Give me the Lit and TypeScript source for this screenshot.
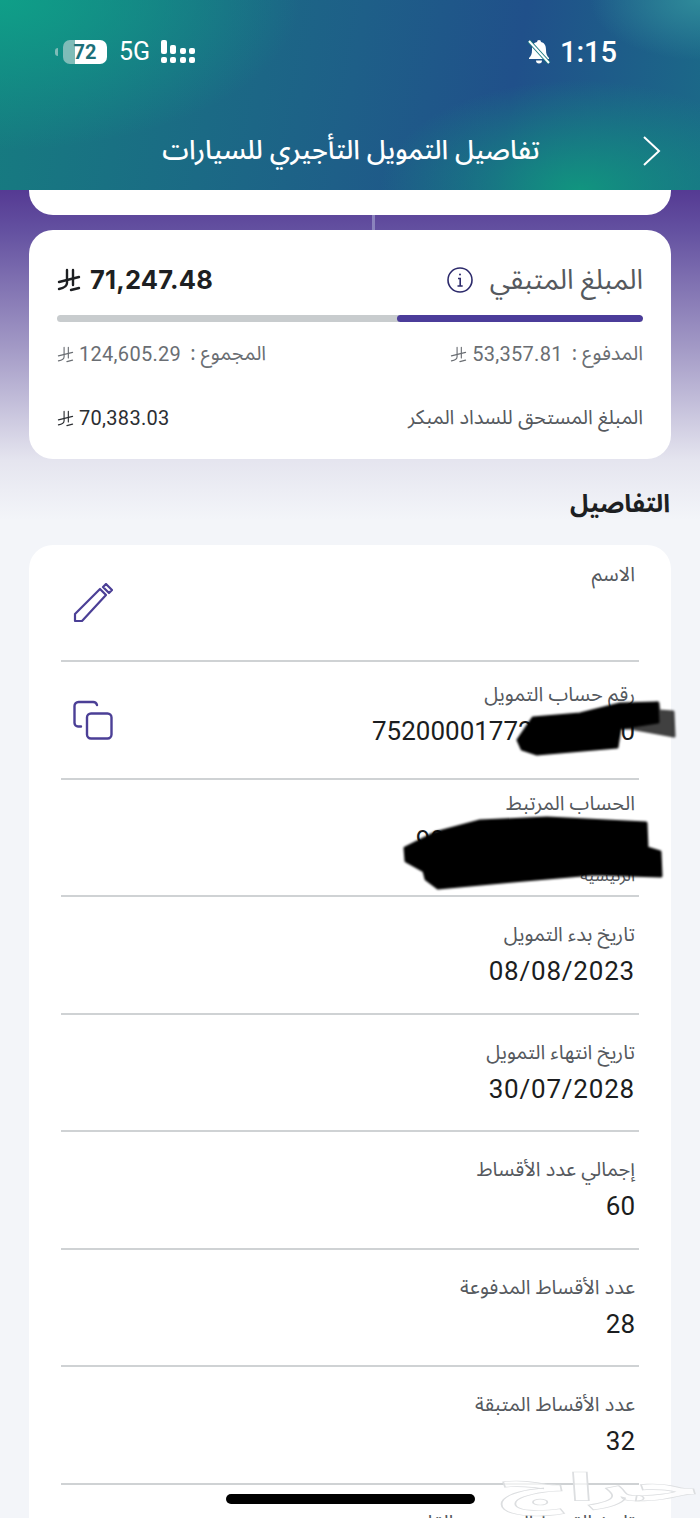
import { LitElement, html, css, svg } from 'lit';
import { customElement } from 'lit/decorators.js';

const riyal = (size: number, weight = 1.6) => html`<svg class="sar" width=${size} height=${size} viewBox="0 0 24 24" fill="none" stroke="currentColor" stroke-width=${weight} stroke-linecap="round">
  <path d="M10 2v13c0 3-3 5-8 6" />
  <path d="M16 2v15" />
  <path d="M2 14l20-5" />
  <path d="M14 22l8-2" />
</svg>`;

const rows = [
  { label: 'تاريخ بدء التمويل', value: '08/08/2023', date: true },
  { label: 'تاريخ انتهاء التمويل', value: '30/07/2028', date: true },
  { label: 'إجمالي عدد الأقساط', value: '60', date: false },
  { label: 'عدد الأقساط المدفوعة', value: '28', date: false },
  { label: 'عدد الأقساط المتبقة', value: '32', date: false },
];

/** Loan details screen. */
@customElement('app-root')
export class AppRoot extends LitElement {
  static styles = css`
    :host {
      display: block;
      position: relative;
      width: 700px;
      height: 1518px;
      overflow: hidden;
      background: #f3f5f9;
      font-family: 'Noto Sans Arabic', 'DejaVu Sans', 'Noto Sans', sans-serif;
      color: #1b1d20;
    }
    .head {
      height: 190px;
      box-sizing: border-box;
      padding-top: 40px;
      color: #fff;
      background:
        radial-gradient(200px 110px at 580px 190px, #11957f 0%, rgba(17, 149, 127, 0) 100%),
        radial-gradient(110px 60px at 700px 0px, #2f8a9a 0%, rgba(47, 138, 154, 0) 100%),
        radial-gradient(300px 150px at 0px 0px, #0f9f88 0%, rgba(15, 159, 136, 0) 100%),
        linear-gradient(100deg, #167c80 0%, #1e5f88 50%, #20508a 72%, #1b6a88 100%);
    }
    .status {
      display: flex;
      align-items: center;
      height: 24px;
      padding: 0 83px 0 58px;
      font-family: Roboto, sans-serif;
    }
    .battery {
      position: relative;
      box-sizing: border-box;
      width: 44px;
      height: 24px;
      margin-left: 5px;
      border-radius: 7px;
      background: linear-gradient(90deg, #7fbcb8 0 28%, #fff 28%);
      color: #1c6f78;
      font: 700 20px/24px Roboto, sans-serif;
      text-align: center;
    }
    .tab {
      width: 3px;
      height: 8px;
      margin-left: -3px;
      border-radius: 3px 0 0 3px;
      background: #7fbcb8;
    }
    .net {
      margin: 0 10px 0 12px;
      font-size: 25px;
      line-height: 24px;
    }
    .time {
      margin-left: 9px;
      font-size: 29px;
      font-weight: 500;
      line-height: 24px;
    }
    .push {
      flex: 1;
    }
    .nav {
      display: flex;
      align-items: center;
      justify-content: center;
      position: relative;
      margin-top: 62px;
      height: 48px;
      font-size: 26.700px;
      font-weight: 500;
    }
    .nav .title {
      margin-right: -2px;
    }
    .back {
      position: absolute;
      right: 38px;
      top: 10px;
    }
    .top {
      height: 330px;
      margin-bottom: -330px;
      background: linear-gradient(180deg, #553a93 0%, #6350a0 12%, #a39ac6 48%, #e5e5ef 82%, #f3f5f9 100%);
    }
    .body {
      position: relative;
      padding: 0 29px;
    }
    .stub {
      height: 25px;
      background: #fff;
      border-radius: 0 0 24px 24px;
    }
    .tick {
      width: 3px;
      height: 15px;
      margin: 0 auto;
      transform: translateX(23px);
      background: #8b83bd;
    }
    .card {
      background: #fff;
      border-radius: 24px;
    }
    .summary {
      height: 229px;
      box-sizing: border-box;
      padding: 30px 28px 0 28px;
    }
    .line {
      display: flex;
      align-items: center;
      justify-content: space-between;
    }
    .remain {
      height: 40px;
    }
    .remain .name {
      font-size: 27.700px;
      color: #55595e;
      line-height: 40px;
    }
    .name-wrap {
      display: flex;
      align-items: center;
      gap: 17px;
    }
    .amount {
      display: flex;
      align-items: center;
      gap: 9px;
      direction: ltr;
      font: 700 25.500px/40px Inter, Roboto, sans-serif;
      color: #1d1f22;
      letter-spacing: 0.2px;
    }
    .bar {
      display: flex;
      height: 7px;
      margin: 15px 0 0;
      border-radius: 4px;
      overflow: hidden;
      background: #c8ccce;
    }
    .bar i {
      display: block;
      width: 42%;
      background: #4b3c9a;
      border-radius: 4px;
    }
    .small {
      font-size: 20px;
      line-height: 28px;
      color: #6a6e73;
    }
    .paid {
      margin-top: 18px;
    }
    .early {
      margin-top: 36px;
    }
    .pair {
      display: flex;
      align-items: center;
      gap: 9px;
    }
    .money {
      display: inline-flex;
      align-items: center;
      gap: 5px;
      direction: ltr;
      font-family: Roboto, sans-serif;
      font-size: 20px;
      letter-spacing: 0.3px;
    }
    .sar {
      flex: none;
    }
    .early .money {
      color: #2b2e32;
    }
    .early .sub {
      color: #55595e;
    }
    h2 {
      margin: 27px 1px 23px 0;
      font-size: 25px;
      line-height: 36px;
      font-weight: 700;
      color: #1d1f22;
    }
    .details {
      height: 1000px;
      padding: 0 32px;
    }
    .row {
      display: flex;
      box-sizing: border-box;
      height: 117.5px;
      border-bottom: 2px solid #cfd2d4;
    }
    .row:first-child {
      height: 117px;
    }
    .row:first-child .text {
      padding-top: 17px;
    }
    .text {
      padding: 25px 4px 0 0;
    }
    .row.account .text {
      padding-top: 20px;
    }
    .row.linked .text {
      padding-top: 11px;
    }
    .label {
      font-size: 20px;
      line-height: 26px;
      color: #55595e;
    }
    .value {
      margin-top: 5px;
      font: 400 26px/36px Roboto, sans-serif;
      letter-spacing: 0;
      text-align: right;
      color: #1b1d20;
    }
    .value.date {
      letter-spacing: 0.8px;
    }
    .tiny {
      margin-top: 8px;
      font-size: 17px;
      line-height: 20px;
      color: #55595e;
    }
    .row svg {
      align-self: center;
      margin-right: auto;
      margin-left: 12px;
    }
    .cut {
      border: 0;
    }
    .mask {
      position: absolute;
      left: 0;
      top: 0;
      pointer-events: none;
      filter: blur(1px);
    }
    .home {
      position: absolute;
      left: 226px;
      top: 1494px;
      width: 249px;
      height: 10px;
      border-radius: 5px;
      background: #000;
    }
    .mark {
      position: absolute;
      left: 500px;
      top: 1456px;
      font-size: 56px;
      font-weight: 700;
      line-height: 64px;
      color: rgba(255, 255, 255, 0.7);
      -webkit-text-stroke: 1px #dcdee0;
      transform: scale(1.75, 0.7);
      transform-origin: left center;
    }
  `;

  render() {
    return html`
      <div class="head">
        <div class="status">
          <span class="tab"></span>
          <span class="battery">72</span>
          <span class="net">5G</span>
          <svg width="36" height="24" viewBox="0 0 36 24" fill="#fff">
            <rect x="1" y="0" width="6" height="14" rx="2"/><rect x="1" y="17" width="6" height="6" rx="2"/>
            <rect x="10" y="5" width="6" height="9" rx="2"/><rect x="10" y="17" width="6" height="6" rx="2"/>
            <rect x="20" y="8" width="6" height="6" rx="2"/><rect x="20" y="17" width="6" height="6" rx="2"/>
            <rect x="29" y="8" width="6" height="6" rx="2"/><rect x="29" y="17" width="6" height="6" rx="2"/>
          </svg>
          <span class="push"></span>
          <svg width="24" height="26" viewBox="0 0 24 26" fill="#fff">
            <path d="M12 1a2 2 0 0 1 2 2c4 1 5 4 5 8 0 4 1 6 3 8v1H2v-1c2-2 3-4 3-8 0-4 1-7 5-8a2 2 0 0 1 2-2z"/>
            <path d="M9 21.5h6a3 3 0 0 1-6 0z"/>
            <path d="M2 2l20 22" stroke="#1a7a80" stroke-width="4"/>
            <path d="M2 2l20 22" stroke="#fff" stroke-width="2"/>
          </svg>
          <span class="time">1:15</span>
        </div>
        <div class="nav" dir="rtl">
          <span class="title">تفاصيل التمويل التأجيري للسيارات</span>
          <svg class="back" width="20" height="30" viewBox="0 0 20 30" fill="none" stroke="#fff" stroke-width="2">
            <path d="M2 1l15 14L2 29"/>
          </svg>
        </div>
      </div>

      <div class="top"></div>
      <div class="body" dir="rtl">
        <div class="stub"></div>
        <div class="tick"></div>

        <section class="card summary">
          <div class="line remain">
            <div class="name-wrap">
              <span class="name">المبلغ المتبقي</span>
              <svg width="26" height="26" viewBox="0 0 26 26" fill="none" stroke="#2c2a6b" stroke-width="1.6">
                <circle cx="13" cy="13" r="12"/>
                <path d="M11 11.5h2.2V19M10.5 19h5.2"/>
                <circle cx="13" cy="7.6" r="1" fill="#2c2a6b" stroke="none"/>
              </svg>
            </div>
            <span class="amount">${riyal(24, 2.4)}71,247.48</span>
          </div>
          <div class="bar"><i></i></div>
          <div class="line small paid">
            <span class="pair"><span>المدفوع :</span><span class="money">${riyal(17)}53,357.81</span></span>
            <span class="pair"><span>المجموع :</span><span class="money">${riyal(17)}124,605.29</span></span>
          </div>
          <div class="line small early">
            <span class="sub">المبلغ المستحق للسداد المبكر</span>
            <span class="money">${riyal(17)}70,383.03</span>
          </div>
        </section>

        <h2>التفاصيل</h2>

        <section class="card details">
          <div class="row">
            <div class="text"><div class="label">الاسم</div></div>
            <svg width="40" height="40" viewBox="0 0 40 40" fill="none" stroke="#4b3f96" stroke-width="2.200" stroke-linejoin="round">
              <path d="M2 38v-7L27 6l6 6L9 38z"/>
              <path d="M30 4l3-3 6 6-3 3z"/>
            </svg>
          </div>
          <div class="row account">
            <div class="text">
              <div class="label">رقم حساب التمويل</div>
              <div class="value" dir="ltr">752000017720000000</div>
            </div>
            <svg width="40" height="40" viewBox="0 0 40 40" fill="none" stroke="#4b3f96" stroke-width="2.400" stroke-linecap="round">
              <rect x="14" y="13.500" width="24.500" height="25" rx="4"/>
              <path d="M8 26.500H5a3.500 3.500 0 0 1-3.500-3.500V6a4 4 0 0 1 4-4H20a4 4 0 0 1 4 3"/>
            </svg>
          </div>
          <div class="row linked">
            <div class="text">
              <div class="label">الحساب المرتبط</div>
              <div class="value" dir="ltr">990000000000000</div>
              <div class="tiny">الرئيسية</div>
            </div>
          </div>
          ${rows.map(
            (r) => html`<div class="row">
              <div class="text">
                <div class="label">${r.label}</div>
                <div class="value ${r.date ? 'date' : ''}" dir="ltr">${r.value}</div>
              </div>
            </div>`
          )}
          <div class="row cut">
            <div class="text"><div class="label">تاريخ القسط المستحق القادم</div></div>
          </div>
        </section>
      </div>

      <svg class="mask" width="700" height="1518" fill="#000" stroke="#000" stroke-width="3" stroke-linejoin="round">
        ${svg`<path d="M518 740L533 718 580 714 620 704 657 703 658 722 620 728 617 747 537 754 522 749z"/>
        <path d="M622 708L658 703 659 711 673 712 674 736 630 728 622 728z" opacity="0.75"/>
        <path d="M405 848L435 833 480 821 547 818 646 823 647 848 660 852 661 876 593 874 513 881 438 888 426 879 424 871 406 861z"/>`}
      </svg>
      <div class="mark" dir="rtl">حراج</div>
      <div class="home"></div>
    `;
  }
}
